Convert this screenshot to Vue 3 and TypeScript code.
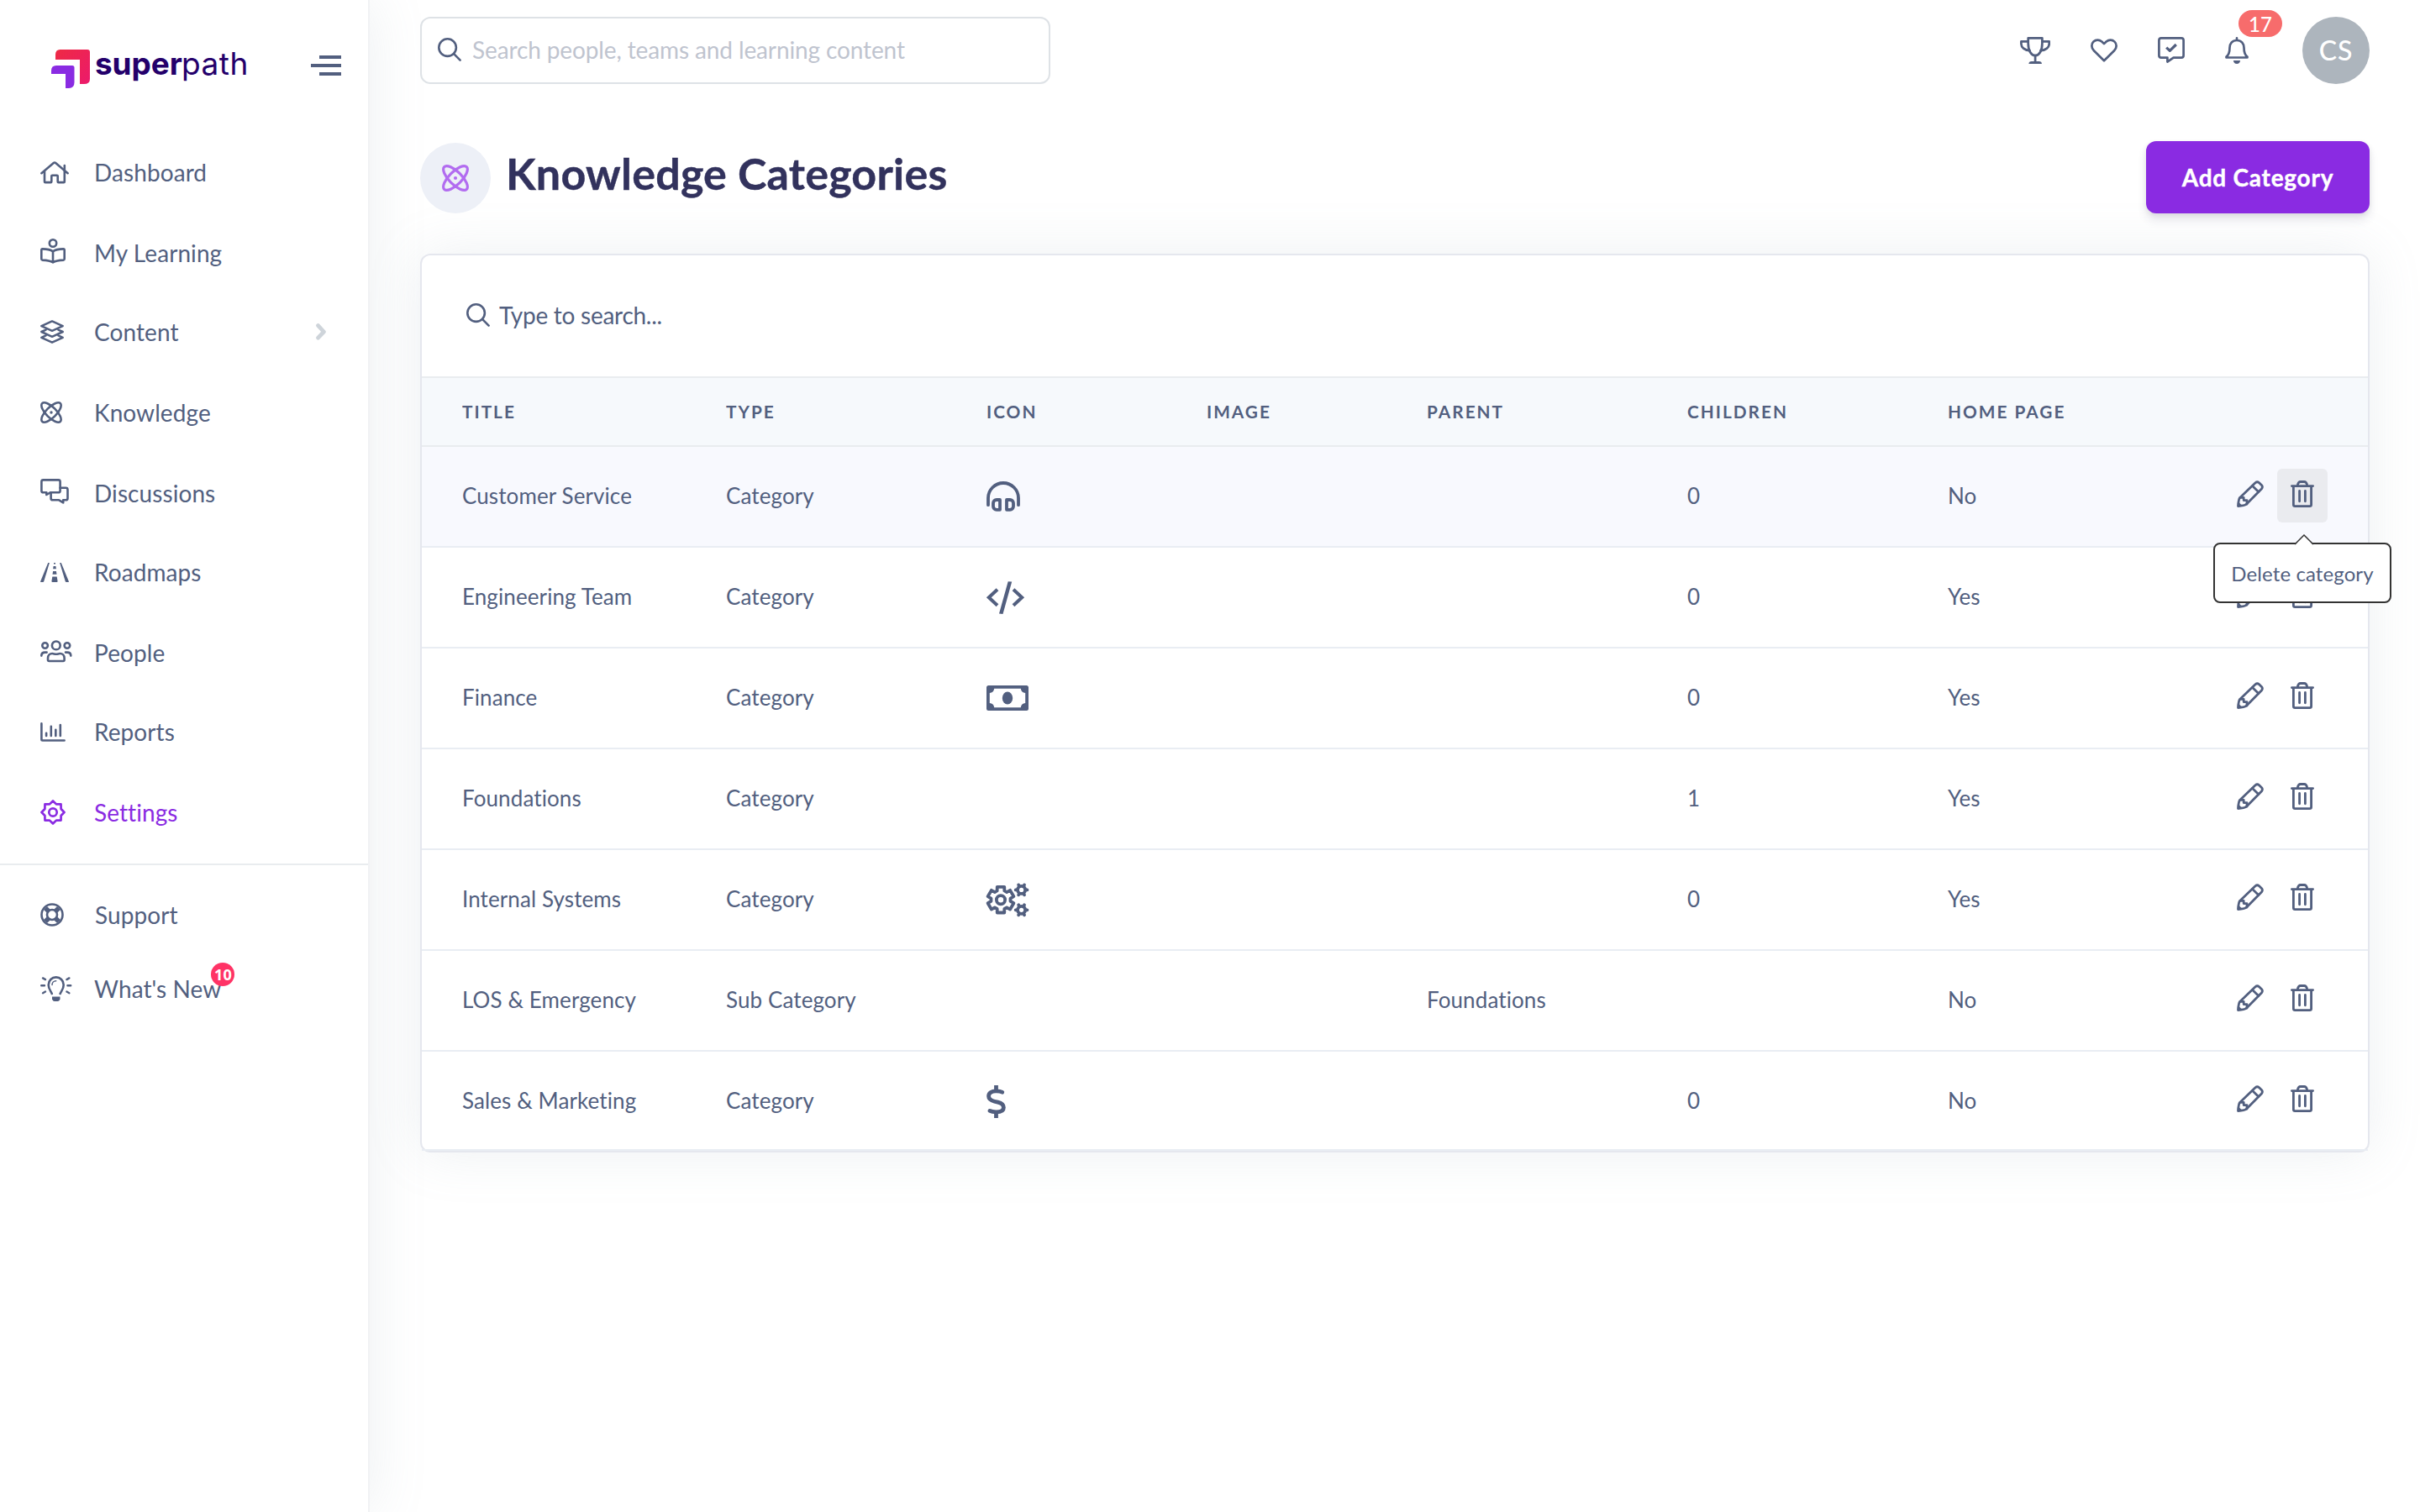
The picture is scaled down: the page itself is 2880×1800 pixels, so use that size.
<script setup lang="ts">
interface Glyph {
  w: number
  h: number
  sw: number
  body: string
}

interface NavItem {
  label: string
  icon: string
  active?: boolean
  chevron?: boolean
  badge?: number
}

interface CategoryRow {
  title: string
  type: string
  icon?: string
  parent?: string
  children?: number
  home: 'Yes' | 'No'
}

const polar = (cx: number, cy: number, r: number, deg: number): string => {
  const a = (deg * Math.PI) / 180
  return `${(cx + r * Math.cos(a)).toFixed(2)} ${(cy + r * Math.sin(a)).toFixed(2)}`
}

/** Closed star outline with alternating radii. */
const star = (c: number, outer: number, inner: number, n: number): string => {
  const pts: string[] = []
  for (let i = 0; i < n; i++) {
    pts.push(polar(c, c, outer, (360 / n) * i), polar(c, c, inner, (360 / n) * (i + 0.5)))
  }
  return `M${pts.join('L')}Z`
}

/** Closed gear outline with flat teeth. */
const gear = (cx: number, cy: number, outer: number, inner: number, n: number, ao: number, ai: number): string => {
  const pts: string[] = []
  for (let i = 0; i < n; i++) {
    const a = (360 / n) * i - 90
    pts.push(polar(cx, cy, inner, a - ai), polar(cx, cy, outer, a - ao), polar(cx, cy, outer, a + ao), polar(cx, cy, inner, a + ai))
  }
  return `M${pts.join('L')}Z`
}

const teeth = (cx: number, cy: number): string =>
  [0, 60, 120, 180, 240, 300].map((a) => `M${polar(cx, cy, 5, a)}L${polar(cx, cy, 6.9, a)}`).join('')

const glyphs: Record<string, Glyph> = {
  home: {
    w: 34, h: 27, sw: 2.6,
    body: '<path d="M1.4 14.2L15.8 2q1.2-1 2.4 0L32.6 14.2"/><path d="M5 12V24.2q0 .9.9.9H12.4q.9 0 .9-.9V17.6q0-.9.9-.9h5.6q.9 0 .9.9v6.6q0 .9.9.9h6.3q.9 0 .9-.9V5"/>',
  },
  reader: {
    w: 30, h: 30, sw: 2.6,
    body: '<circle cx="15" cy="5.5" r="4.2"/><path d="M15 15.4C12 13.2 7 12.4 2.6 12.4q-1.3 0-1.3 1.3V24.3q0 1.2 1.3 1.3C7 25.8 12 26.6 15 28.4C18 26.6 23 25.8 27.4 25.6q1.3-.1 1.3-1.3V13.7q0-1.3-1.3-1.3C23 12.4 18 13.2 15 15.4V28"/>',
  },
  layers: {
    w: 28, h: 28, sw: 2.5,
    body: '<path d="M14 1.4L26.7 7.1L14 12.8L1.3 7.1Z"/><path d="M6.6 11.6L1.3 14L14 19.8L26.7 14L21.4 11.6"/><path d="M6.6 18.4L1.3 20.9L14 26.7L26.7 20.9L21.4 18.4"/>',
  },
  atom: {
    w: 26, h: 26, sw: 2.6,
    body: '<ellipse cx="13" cy="13" rx="15.3" ry="6.1" transform="rotate(45 13 13)"/><ellipse cx="13" cy="13" rx="15.3" ry="6.1" transform="rotate(-45 13 13)"/><circle cx="13" cy="13" r="1.7" fill="currentColor" stroke="none"/>',
  },
  comments: {
    w: 34, h: 31, sw: 2.6,
    body: '<path d="M3.5 1.4H21.5q2.1 0 2.1 2.1V14.2q0 2.1-2.1 2.1H11.8L7.3 19V16.3H3.5q-2.1 0-2.1-2.1V3.5q0-2.1 2.1-2.1Z"/><path d="M23.6 10.8H30.4q2.1 0 2.1 2.1V23.2q0 2.1-2.1 2.1H27.2V28.4L22.2 25.3H14.7q-2.1 0-2.1-2.1V16.6"/>',
  },
  road: {
    w: 34, h: 23, sw: 0,
    body: '<g fill="currentColor"><path d="M9.2 0H10.9L4.2 22.2Q3.9 23 3.1 23H.9Q-.1 23 .2 22Z"/><path d="M24.8 0H23.1L29.8 22.2Q30.1 23 30.9 23H33.1Q34.1 23 33.8 22Z"/><path d="M16 0h2v1.4h-2zM15.6 4h2.8l.5 3.3h-3.8zM15.1 10h3.8l.6 3.8h-5zM14.3 16.5h5.4l.9 5.5q0 1-1 1h-5.2q-1 0-1-1z"/></g>',
  },
  users: {
    w: 38, h: 27, sw: 2.6,
    body: '<circle cx="18.8" cy="6.4" r="4.9"/><circle cx="5.6" cy="6.5" r="3.3"/><circle cx="31.9" cy="6.5" r="3.3"/><path d="M9 23.6V21.6C9 18.2 11.4 16 14.2 16C16 16 16.8 16.8 18.8 16.8S21.6 16 23.4 16C26.2 16 28.6 18.2 28.6 21.6V23.6q0 1.4-1.4 1.4H10.4q-1.4 0-1.4-1.4Z"/><path d="M1.3 18.6C1.3 16 3.2 14.6 5.6 14.6H7.6"/><path d="M36.3 18.6C36.3 16 34.4 14.6 32 14.6H30"/>',
  },
  chart: {
    w: 30, h: 23, sw: 2.6,
    body: '<path d="M1.4 1.4V20.3q0 1.2 1.2 1.2H28.6M7.1 12.8V16M12.8 4.8V16M18.3 8.8V16M23.8 3V16"/>',
  },
  cog: { w: 30, h: 30, sw: 2.7, body: `<path d="${star(15, 13.5, 10.4, 8)}"/><circle cx="15" cy="15" r="4.7"/>` },
  ring: {
    w: 28, h: 28, sw: 2.6,
    body: '<circle cx="14" cy="14" r="12.5"/><circle cx="14" cy="14" r="6"/><path stroke-width="5.6" stroke-linecap="butt" d="M6 6L9.6 9.6M22 6L18.4 9.6M6 22L9.6 18.4M22 22L18.4 18.4"/>',
  },
  bulb: {
    w: 38, h: 30, sw: 2.6,
    body: '<path d="M13.8 21C12.6 17.6 9.7 15.8 9.7 10.4A9 9 0 0 1 27.7 10.4C27.7 15.8 24.8 17.6 23.6 21"/><path d="M14 24.4H23.5V27.4Q22.4 30 20.6 30H16.9Q15.1 30 14 27.4Z" fill="currentColor" stroke="none"/><path stroke-width="1.5" d="M14 10.4A4.7 4.7 0 0 1 18.7 5.7"/><path stroke-width="2.4" d="M1.2 11.3H5M32.4 11.3H36.2M3 2.4L6 4.1M34.4 2.4L31.4 4.1M3 20.2L6 18.5M34.4 20.2L31.4 18.5"/>',
  },
  search: { w: 28, h: 28, sw: 2.6, body: '<circle cx="11.6" cy="11.6" r="10.3"/><path d="M19.2 19.2L26.6 26.6"/>' },
  trophy: {
    w: 36, h: 32, sw: 2.7,
    body: '<path d="M9.7 1.4H26.4V7.5C26.4 16.6 22.6 22.2 18.1 22.2C13.5 22.2 9.7 16.6 9.7 7.5Z"/><path d="M9.5 5.3H1.4V8.3C1.4 12.2 5.4 16 11.4 16.2M26.6 5.3H34.7V8.3C34.7 12.2 30.7 16 24.7 16.2M18.1 22V30"/><path d="M10.4 32Q10.4 28.9 13.8 28.9H22.5Q25.9 28.9 25.9 32Z" fill="currentColor" stroke="none"/>',
  },
  heart: {
    w: 32, h: 28, sw: 2.7,
    body: '<path d="M16 26.3L3.9 14.3C.6 11 .6 6.3 3.5 3.6C6.2 1 10.4 1.1 13.3 3.5L16 6.1L18.7 3.5C21.6 1.1 25.8 1 28.5 3.6C31.4 6.3 31.4 11 28.1 14.3Z"/>',
  },
  commentCheck: {
    w: 32, h: 32, sw: 2.7,
    body: '<path d="M4 1.4H28q2.6 0 2.6 2.6V22q0 2.6-2.6 2.6H18.6L11.4 29.6V24.6H4q-2.6 0-2.6-2.6V4q0-2.6 2.6-2.6Z"/><path stroke-width="3.2" stroke-linecap="butt" d="M10.2 12.6L14.3 16.4L21.8 9"/>',
  },
  bell: {
    w: 28, h: 32, sw: 2.7,
    body: '<path d="M14 1.4V3.6M14 4C8.4 4 5.5 8.2 5.5 12.8C5.5 18.6 4.6 21.4 1.5 23.6V24.5H26.5V23.6C23.4 21.4 22.5 18.6 22.5 12.8C22.5 8.2 19.6 4 14 4Z"/><path d="M9.9 27.9H18.1Q17.6 32 14 32Q10.4 32 9.9 27.9Z" fill="currentColor" stroke="none"/>',
  },
  headphones: {
    w: 40, h: 36, sw: 3.8,
    body: '<path d="M2 28.2V20A18 18 0 0 1 38 20V28.2"/><path d="M16 22H12a4 4 0 0 0-4 4V29.8a4 4 0 0 0 4 4h4ZM24 22h4a4 4 0 0 1 4 4V29.8a4 4 0 0 1-4 4h-4Z"/>',
  },
  code: {
    w: 45, h: 38, sw: 4,
    body: '<path stroke-linecap="butt" stroke-linejoin="miter" d="M13 9.8L2.8 19.3L13 28.8M32 9.8L42.2 19.3L32 28.8"/><path d="M25.7.2L30.2.4L19.5 39L15 38.4Z" fill="currentColor" stroke="none"/>',
  },
  money: {
    w: 50, h: 30, sw: 0,
    body: '<path fill="currentColor" fill-rule="evenodd" d="M2.5 0H47.5Q50 0 50 2.5V27.5Q50 30 47.5 30H2.5Q0 30 0 27.5V2.5Q0 0 2.5 0ZM9.2 3.8A6 6 0 0 1 3.8 9V21A6 6 0 0 1 9.2 26.2H40.8A6 6 0 0 1 46.2 21V9A6 6 0 0 1 40.8 3.8Z"/><ellipse cx="25" cy="15" rx="6.2" ry="7.6" fill="currentColor"/>',
  },
  gears: {
    w: 50, h: 38, sw: 3.8,
    body: `<path d="${gear(17, 19.2, 15.9, 11.6, 6, 15.5, 22)}"/><circle cx="17" cy="19.2" r="5.1"/><circle cx="41.6" cy="7.4" r="4.5"/><circle cx="41.6" cy="31.3" r="4.5"/><path d="${teeth(41.6, 7.4)}${teeth(41.6, 31.3)}"/>`,
  },
  dollar: {
    w: 23, h: 38, sw: 4.8,
    body: '<path d="M18.8 8.2Q16.5 6.8 11.5 6.8C6 6.8 2.6 9 2.6 13C2.6 16.6 5 18 9.5 19.2L13.5 20.2C18 21.3 20.4 23 20.4 26.4C20.4 30.3 17 31.8 11.5 31.8Q6.6 31.8 4 30.4"/><path stroke-linecap="butt" d="M11.5 0V7M11.5 32V39"/>',
  },
  pencil: {
    w: 32, h: 32, sw: 2.8,
    body: '<path d="M3.6 20.4L22 2.7q2.3-2 4.6 0L29.4 5.4q2 2.3 0 4.6L11.2 28.4Q9 30 1.5 30.5Q2 22.4 3.6 20.4Z"/><path d="M18.6 6.4L25.8 13.4M4 20.4H8.2V23.6H12V28"/><path d="M1 31L2 25.5L6.5 30Z" fill="currentColor" stroke="none"/>',
  },
  trash: {
    w: 28, h: 32, sw: 2.8,
    body: '<path d="M1.4 6.6H26.6M3.4 6.8V28.8q0 1.8 1.8 1.8H22.8q1.8 0 1.8-1.8V6.8M8.2 6Q9 1.5 11.8 1.5h4.4Q19 1.5 19.8 6M10.6 12.4V24.8M17.4 12.4V24.8"/>',
  },
  chevron: { w: 12, h: 20, sw: 4.8, body: '<path d="M2.6 2.6L9.4 10L2.6 17.2"/>' },
}

const mainNav: NavItem[] = [
  { label: 'Dashboard', icon: 'home' },
  { label: 'My Learning', icon: 'reader' },
  { label: 'Content', icon: 'layers', chevron: true },
  { label: 'Knowledge', icon: 'atom' },
  { label: 'Discussions', icon: 'comments' },
  { label: 'Roadmaps', icon: 'road' },
  { label: 'People', icon: 'users' },
  { label: 'Reports', icon: 'chart' },
  { label: 'Settings', icon: 'cog', active: true },
]

const footerNav: NavItem[] = [
  { label: 'Support', icon: 'ring' },
  { label: "What's New", icon: 'bulb', badge: 10 },
]

const columns = ['Title', 'Type', 'Icon', 'Image', 'Parent', 'Children', 'Home page']

const rows: CategoryRow[] = [
  { title: 'Customer Service', type: 'Category', icon: 'headphones', children: 0, home: 'No' },
  { title: 'Engineering Team', type: 'Category', icon: 'code', children: 0, home: 'Yes' },
  { title: 'Finance', type: 'Category', icon: 'money', children: 0, home: 'Yes' },
  { title: 'Foundations', type: 'Category', children: 1, home: 'Yes' },
  { title: 'Internal Systems', type: 'Category', icon: 'gears', children: 0, home: 'Yes' },
  { title: 'LOS & Emergency', type: 'Sub Category', parent: 'Foundations', home: 'No' },
  { title: 'Sales & Marketing', type: 'Category', icon: 'dollar', children: 0, home: 'No' },
]

const svg = (name: string) => {
  const g = glyphs[name]
  return {
    width: g.w,
    height: g.h,
    viewBox: `0 0 ${g.w} ${g.h}`,
    'stroke-width': g.sw,
    fill: 'none',
    stroke: g.sw ? 'currentColor' : 'none',
    'stroke-linecap': 'round' as const,
    'stroke-linejoin': 'round' as const,
    innerHTML: g.body,
  }
}
</script>

<template>
  <div class="app">
    <aside class="sidebar">
      <div class="brand">
        <svg class="mark" width="48" height="48" viewBox="0 0 48 48">
          <defs>
            <linearGradient id="markRed" x1="0" y1="0" x2="1" y2="1">
              <stop offset="0" stop-color="#ee2a44" />
              <stop offset="1" stop-color="#ec1a6c" />
            </linearGradient>
          </defs>
          <path fill="url(#markRed)" d="M10.500 0H43Q46 0 46 3V35Q46 41 39 41H34V12H5V6Q5 0 10.500 0Z" />
          <path fill="#8a2be2" d="M6 19H25Q27.500 19 27.500 21.500V39Q27.500 46 21 46H17V29H0V25Q0 19 6 19Z" />
        </svg>
        <span class="wordmark"><b>super</b><span>path</span></span>
        <span class="burger"><i /><i /><i /></span>
      </div>
      <ul class="nav">
        <li v-for="item in mainNav" :key="item.label" :class="{ active: item.active }">
          <span class="nav-icon"><svg v-bind="svg(item.icon)" /></span>
          <span class="nav-label">{{ item.label }}</span>
          <span v-if="item.chevron" class="chevron"><svg v-bind="svg('chevron')" /></span>
        </li>
      </ul>
      <ul class="nav nav-footer">
        <li v-for="item in footerNav" :key="item.label">
          <span class="nav-icon"><svg v-bind="svg(item.icon)" /></span>
          <span class="nav-label">{{ item.label }}<em v-if="item.badge" class="count">{{ item.badge }}</em></span>
        </li>
      </ul>
    </aside>

    <main class="main">
      <header class="topbar">
        <div class="search">
          <svg v-bind="svg('search')" />
          <span>Search people, teams and learning content</span>
        </div>
        <div class="tools">
          <svg v-bind="svg('trophy')" />
          <svg v-bind="svg('heart')" />
          <svg v-bind="svg('commentCheck')" />
          <span class="alerts"><svg v-bind="svg('bell')" /><em>17</em></span>
          <span class="avatar">CS</span>
        </div>
      </header>

      <div class="heading">
        <span class="heading-icon"><svg v-bind="svg('atom')" class="heading-atom" /></span>
        <h1>Knowledge Categories</h1>
        <button type="button" class="add">Add Category</button>
      </div>

      <section class="card">
        <div class="filter">
          <svg v-bind="svg('search')" />
          <span>Type to search...</span>
        </div>
        <div class="grid head">
          <span v-for="c in columns" :key="c">{{ c }}</span>
        </div>
        <div v-for="(row, i) in rows" :key="row.title" class="grid row" :class="{ hovered: i === 0 }">
          <span>{{ row.title }}</span>
          <span>{{ row.type }}</span>
          <span class="cell-icon"><svg v-if="row.icon" v-bind="svg(row.icon)" /></span>
          <span />
          <span>{{ row.parent }}</span>
          <span>{{ row.children }}</span>
          <span>{{ row.home }}</span>
          <span class="actions">
            <span class="action"><svg v-bind="svg('pencil')" /></span>
            <span class="action trash" :class="{ on: i === 0 }">
              <svg v-bind="svg('trash')" />
              <span v-if="i === 0" class="tooltip">
                <svg class="arrow" width="22" height="13" viewBox="0 0 22 13">
                  <path d="M0 13L11 1L22 13Z" fill="#fff" />
                  <path d="M0 12L11 1L22 12" fill="none" stroke="#333" stroke-width="1.500" />
                </svg>
                Delete category
              </span>
            </span>
          </span>
        </div>
      </section>
    </main>
  </div>
</template>

<style>
body {
  margin: 0;
  background: #fff;
}
</style>

<style scoped>
.app {
  display: flex;
  width: 2880px;
  height: 1800px;
  overflow: hidden;
  background: #fff;
  color: #525f7f;
  font-family: Lato, "Liberation Sans", sans-serif;
  font-size: 26px;
}
svg {
  display: block;
  flex: none;
}
em,
i {
  font-style: normal;
}
.sidebar {
  box-sizing: border-box;
  flex: none;
  width: 440px;
  border-right: 2px solid #f1f2f4;
  box-shadow: 0 0 64px rgba(136, 152, 170, 0.15);
}
.brand {
  display: flex;
  align-items: flex-start;
  height: 98px;
  padding: 59px 32px 0 61px;
}
.wordmark {
  display: flex;
  margin: -5px 0 0 4px;
  color: #24006b;
  font-family: Inter, sans-serif;
  font-size: 37px;
  line-height: 44px;
}
.wordmark b {
  width: 103px;
  font-weight: 700;
  letter-spacing: -0.1px;
}
.wordmark span {
  letter-spacing: 0.5px;
}
.burger {
  display: flex;
  flex-direction: column;
  align-items: flex-end;
  gap: 6px;
  margin: 7px 0 0 auto;
}
.burger i {
  width: 26px;
  height: 4px;
  background: #525f7f;
}
.burger i:nth-child(2) {
  width: 36px;
}
.nav {
  margin: 0;
  padding: 0 0 13px;
  list-style: none;
  font-size: 28px;
  letter-spacing: 0.08px;
}
.nav li {
  display: flex;
  align-items: flex-start;
  height: 96px;
  padding: 0 50px 0 48px;
}
.nav li:nth-child(2),
.nav li:nth-child(5),
.nav li:nth-child(7) {
  height: 94px;
}
.nav li:nth-child(2) .nav-icon,
.nav li:nth-child(5) .nav-icon,
.nav li:nth-child(7) .nav-icon {
  height: 92px;
}
.nav-icon {
  display: flex;
  align-items: center;
  width: 64px;
  height: 96px;
}
.nav-label {
  position: relative;
  line-height: 96px;
}
.nav .active {
  color: #8a2be2;
}
.chevron {
  display: flex;
  align-items: center;
  height: 96px;
  margin-left: auto;
  color: #ced4da;
}
.nav-footer {
  padding-top: 15px;
  border-top: 2px solid #e9ecef;
}
.nav-footer li {
  height: 88px;
}
.nav-footer li:first-child .nav-icon {
  width: 65px;
}
.nav-footer li:nth-child(2) {
  height: 88px;
}
.nav-footer .nav-icon,
.nav-footer li:nth-child(2) .nav-icon {
  height: 88px;
}
.nav-footer .nav-label {
  line-height: 88px;
}
.count {
  position: absolute;
  top: 13px;
  right: -16px;
  width: 28px;
  height: 28px;
  border-radius: 50%;
  background: #ff3366;
  color: #fff;
  font: 700 18px/28px "Open Sans", sans-serif;
  text-align: center;
}
.main {
  flex: 1;
  padding: 20px 60px 0;
}
.topbar {
  display: flex;
  justify-content: space-between;
  height: 80px;
}
.search {
  box-sizing: border-box;
  display: flex;
  align-items: center;
  gap: 13px;
  width: 750px;
  padding: 0 19px 2px;
  border: 2px solid #dee2e6;
  border-radius: 12px;
  font-size: 28px;
  letter-spacing: -0.12px;
}
.search span {
  color: #bfc4cf;
}
.tools {
  display: flex;
  align-items: center;
}
.tools > svg {
  margin-right: 48px;
}
.alerts {
  position: relative;
  margin-right: 64px;
}
.alerts em {
  position: absolute;
  left: 16px;
  bottom: 32px;
  width: 52px;
  height: 32px;
  border-radius: 16px;
  background: #f76c6c;
  color: #fff;
  font-size: 24px;
  font-weight: 500;
  line-height: 33px;
  text-align: center;
}
.avatar {
  width: 80px;
  height: 80px;
  border-radius: 50%;
  background: #adb5bd;
  color: #fff;
  font-size: 32px;
  font-weight: 500;
  letter-spacing: 1px;
  line-height: 80px;
  text-align: center;
}
.heading {
  display: flex;
  align-items: flex-start;
  height: 134px;
  padding-top: 68px;
}
.heading-icon {
  display: flex;
  align-items: center;
  justify-content: center;
  width: 84px;
  height: 84px;
  margin-top: 2px;
  border-radius: 50%;
  background: #edf0f7;
  color: #b26cf0;
}
.heading-atom {
  width: 32px;
  height: 32px;
}
h1 {
  margin: 0 auto 0 18px;
  color: #32325d;
  font-size: 52px;
  font-weight: 700;
  letter-spacing: 0.22px;
  line-height: 76px;
  -webkit-text-stroke: 0.4px currentColor;
}
.add {
  width: 266px;
  height: 86px;
  padding: 0;
  border: 0;
  border-radius: 12px;
  background: #8a2be2;
  box-shadow: 0 8px 12px rgba(50, 50, 93, 0.11), 0 2px 6px rgba(0, 0, 0, 0.08);
  color: #fff;
  font: 700 28px/86px Lato, sans-serif;
  letter-spacing: 0.75px;
  -webkit-text-stroke: 0.4px currentColor;
}
.card {
  box-sizing: border-box;
  height: 1070px;
  border: 2px solid #e5e7ee;
  border-radius: 12px;
  background: #fff;
  box-shadow: 0 0 64px rgba(136, 152, 170, 0.15);
}
.filter {
  display: flex;
  align-items: center;
  gap: 11px;
  height: 144px;
  padding-left: 53px;
  font-size: 28px;
  letter-spacing: -0.27px;
}
.filter svg {
  margin-bottom: 2px;
}
.filter span {
  padding-bottom: 2px;
}
.grid {
  display: grid;
  grid-template-columns: 314px 310px 262px 262px 310px 310px 330px 1fr;
  padding-left: 48px;
}
.head {
  height: 80px;
  border-top: 2px solid #e9ecef;
  border-bottom: 2px solid #e9ecef;
  background: #f6f9fc;
  font-size: 20.8px;
  font-weight: 700;
  letter-spacing: 2px;
  line-height: 80px;
  text-transform: uppercase;
}
.row {
  height: 118px;
  border-bottom: 2px solid #e9edf3;
  letter-spacing: 0.1px;
  line-height: 116px;
}
.row:last-child {
  height: 116px;
}
.hovered {
  background: #f8f9fe;
}
.cell-icon {
  display: flex;
  align-items: center;
  height: 118px;
}
.cell-icon svg {
  overflow: visible;
}
.actions {
  display: flex;
  gap: 2px;
  height: 64px;
  padding-top: 26px;
}
.action {
  position: relative;
  box-sizing: border-box;
  display: flex;
  align-items: center;
  justify-content: center;
  width: 60px;
  height: 64px;
  padding-bottom: 4px;
  border-radius: 6px;
}
.on {
  background: #eaebef;
}
.tooltip {
  position: absolute;
  z-index: 2;
  top: 88px;
  left: -76px;
  box-sizing: border-box;
  width: 212px;
  height: 72px;
  border: 2px solid #333;
  border-radius: 8px;
  background: #fff;
  font-size: 24px;
  line-height: 69px;
  text-align: center;
  white-space: nowrap;
}
.arrow {
  position: absolute;
  top: -12px;
  left: 95px;
}
</style>
